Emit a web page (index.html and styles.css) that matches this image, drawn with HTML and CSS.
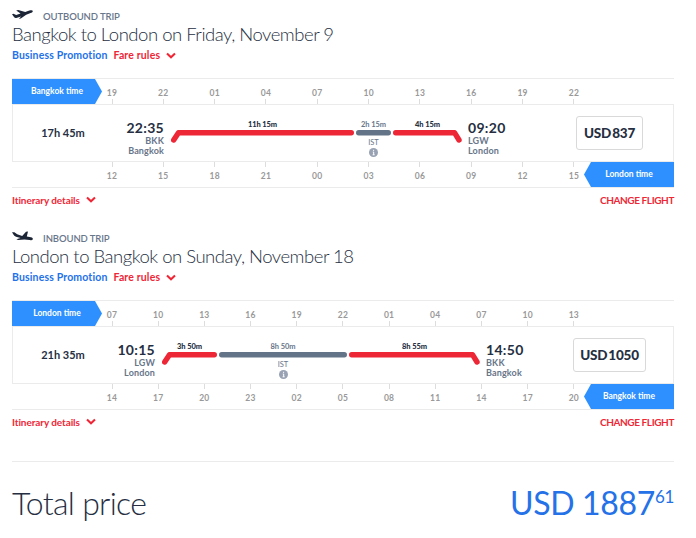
FILE: index.html
```html
<!DOCTYPE html>
<html lang="en">
<head>
    <meta charset="utf-8" />
    <title>Your flights</title>
    <link rel="stylesheet" href="styles.css">
</head>
<body>

    <!-- Outbound -->
    <section class="trip">
        <div class="trip-label">
            <svg class="plane" viewBox="0 0 21 11"><path d="M0 5.2 L1.4 4.7 L4.2 6 L8.6 4.6 L4.2 1.6 L6.2 0.9 L13.2 3 L17.4 1.6 C19.2 1.1 20.6 1.2 20.8 1.9 C21 2.7 19.9 3.6 18.6 4.1 L14.2 5.8 L8.8 9.5 L6.8 9.8 L9.2 7.5 L4.2 9 Q2.8 9.2 2 8 Z"/></svg>
            <span>OUTBOUND TRIP</span>
        </div>
        <h2 class="title">Bangkok to London on Friday, November 9</h2>
        <div class="fare">
            <a class="promo">Business Promotion</a>
            <a class="rules">Fare rules</a>
            <svg class="chevron" viewBox="0 0 10 7"><path d="M1 1.5 L5 5.2 L9 1.5"/></svg>
        </div>

        <div class="timeline">
            <div class="scale scale-top">
                <div class="zone zone-left">Bangkok time</div>
                <div class="hours"><span>19</span><span>22</span><span>01</span><span>04</span><span>07</span><span>10</span><span>13</span><span>16</span><span>19</span><span>22</span></div>
            </div>
            <div class="flight">
                <div class="duration">17h 45m</div>
                <div class="departure" style="width: 51px">
                    <div class="time">22:35</div>
                    <div>BKK</div>
                    <div>Bangkok</div>
                </div>
                <div class="route">
                    <div class="leg" style="width: 183px">
                        <span>11h 15m</span>
                        <svg class="line" width="183" height="14"><path d="M2.7 10 L7.5 2.7 H180.3"/></svg>
                    </div>
                    <div class="leg stop" style="width: 35px">
                        <span>2h 15m</span>
                        <svg class="line" width="35" height="14"><path d="M2.7 2.7 H32.3"/></svg>
                        <div class="airport">IST</div>
                        <svg class="info" viewBox="0 0 9 9"><circle cx="4.5" cy="4.5" r="4.5"/><path d="M4.6 1.8 V2.9 M3.8 4 H4.7 V6.8 M3.6 6.8 H5.6"/></svg>
                    </div>
                    <div class="leg" style="width: 69px">
                        <span>4h 15m</span>
                        <svg class="line" width="69" height="14"><path d="M2.7 2.7 H61.5 L66 10"/></svg>
                    </div>
                </div>
                <div class="arrival">
                    <div class="time">09:20</div>
                    <div>LGW</div>
                    <div>London</div>
                </div>
                <div class="price-cell">
                    <div class="price">USD<b>837</b></div>
                </div>
            </div>
            <div class="scale scale-bottom">
                <div class="hours"><span>12</span><span>15</span><span>18</span><span>21</span><span>00</span><span>03</span><span>06</span><span>09</span><span>12</span><span>15</span></div>
                <div class="zone zone-right">London time</div>
            </div>
        </div>

        <div class="links">
            <a class="details">Itinerary details</a>
            <svg class="chevron" viewBox="0 0 10 7"><path d="M1 1.5 L5 5.2 L9 1.5"/></svg>
            <a class="change">CHANGE FLIGHT</a>
        </div>
    </section>

    <!-- Inbound -->
    <section class="trip">
        <div class="trip-label">
            <svg class="plane" viewBox="0 0 21 11"><path d="M0 1.2 L2.4 1.3 L5.2 3.3 L10.2 4.9 L14 0.8 L16 0.5 L14.8 5.6 L18.9 6.3 C20.4 6.7 21 7.5 20.8 8.2 C20.5 9.1 19.2 9.2 17.6 9.1 L12.4 8.6 L6.2 9 L4.4 8.2 L8.6 7 L4 5.7 Q2 5 1.4 3.6 Z"/></svg>
            <span>INBOUND TRIP</span>
        </div>
        <h2 class="title">London to Bangkok on Sunday, November 18</h2>
        <div class="fare">
            <a class="promo">Business Promotion</a>
            <a class="rules">Fare rules</a>
            <svg class="chevron" viewBox="0 0 10 7"><path d="M1 1.5 L5 5.2 L9 1.5"/></svg>
        </div>

        <div class="timeline">
            <div class="scale scale-top">
                <div class="zone zone-left">London time</div>
                <div class="hours"><span>07</span><span>10</span><span>13</span><span>16</span><span>19</span><span>22</span><span>01</span><span>04</span><span>07</span><span>10</span><span>13</span></div>
            </div>
            <div class="flight">
                <div class="duration">21h 35m</div>
                <div class="departure" style="width: 42px">
                    <div class="time">10:15</div>
                    <div>LGW</div>
                    <div>London</div>
                </div>
                <div class="route">
                    <div class="leg" style="width: 55px">
                        <span>3h 50m</span>
                        <svg class="line" width="55" height="14"><path d="M2.7 10 L7.5 2.7 H52.3"/></svg>
                    </div>
                    <div class="leg stop" style="width: 128px">
                        <span>8h 50m</span>
                        <svg class="line" width="128" height="14"><path d="M2.7 2.7 H125.3"/></svg>
                        <div class="airport">IST</div>
                        <svg class="info" viewBox="0 0 9 9"><circle cx="4.5" cy="4.5" r="4.5"/><path d="M4.6 1.8 V2.9 M3.8 4 H4.7 V6.8 M3.6 6.8 H5.6"/></svg>
                    </div>
                    <div class="leg" style="width: 131px">
                        <span>8h 55m</span>
                        <svg class="line" width="131" height="14"><path d="M2.7 2.7 H123.5 L128 10"/></svg>
                    </div>
                </div>
                <div class="arrival">
                    <div class="time">14:50</div>
                    <div>BKK</div>
                    <div>Bangkok</div>
                </div>
                <div class="price-cell">
                    <div class="price">USD<b>1050</b></div>
                </div>
            </div>
            <div class="scale scale-bottom">
                <div class="hours"><span>14</span><span>17</span><span>20</span><span>23</span><span>02</span><span>05</span><span>08</span><span>11</span><span>14</span><span>17</span><span>20</span></div>
                <div class="zone zone-right">Bangkok time</div>
            </div>
        </div>

        <div class="links">
            <a class="details">Itinerary details</a>
            <svg class="chevron" viewBox="0 0 10 7"><path d="M1 1.5 L5 5.2 L9 1.5"/></svg>
            <a class="change">CHANGE FLIGHT</a>
        </div>
    </section>

    <div class="total">
        <span class="total-label">Total price</span>
        <span class="total-price">USD 1887<sup>61</sup></span>
    </div>

</body>
</html>
```

FILE: styles.css
```css
:root {
    --red: #ee2737;
    --blue: #2e90ff;
    --link: #2471e8;
    --dark: #262f42;
    --grey: #68768a;
    --rule: #ebebeb;
}

* {
    box-sizing: border-box;
}

body {
    margin: 0;
    padding: 0 22px 0 12px;
    background: #fff;
    color: var(--dark);
    font-family: Lato, sans-serif;
    font-size: 9px;
}

svg {
    display: block;
    flex: none;
}

.trip {
    height: 222px;
    padding-top: 9px;
}

/* Heading */
.trip-label {
    display: flex;
    height: 14px;
    gap: 10px;
    color: var(--grey);
    font-size: 9.5px;
    font-weight: 600;
    line-height: 15px;
    letter-spacing: -0.1px;
}

.plane {
    width: 21px;
    height: 11px;
    fill: #1c2536;
}

.title {
    margin: 0;
    font-size: 18.5px;
    font-weight: 300;
    line-height: 23px;
    letter-spacing: -0.48px;
    white-space: nowrap;
}

.fare,
.links {
    display: flex;
    align-items: center;
    height: 18px;
    font-size: 10.5px;
    font-weight: 700;
    color: var(--red);
}

.fare {
    letter-spacing: 0.15px;
}

.promo {
    width: 101.5px;
    color: var(--link);
}

.chevron {
    width: 10px;
    height: 7px;
    margin-left: 6px;
    fill: none;
    stroke: var(--red);
    stroke-width: 2.1;
}

/* Timeline */
.timeline {
    height: 110px;
    margin-top: 14px;
    border-top: 1px solid var(--rule);
    border-bottom: 1px solid var(--rule);
}

.scale {
    display: flex;
    height: 25px;
}

.zone {
    width: 90px;
    color: #fff;
    font-size: 8.5px;
    font-weight: 700;
    line-height: 25px;
    text-align: center;
    background: var(--blue);
}

.zone-left {
    clip-path: polygon(0 0, 83px 0, 100% 50%, 83px 100%, 0 100%);
}

.zone-right {
    margin-left: 10px;
    clip-path: polygon(7px 0, 100% 0, 100% 100%, 7px 100%, 0 50%);
}

.hours {
    display: flex;
    justify-content: space-between;
    width: 462px;
    color: #999;
    font-size: 8.5px;
    font-weight: 700;
    letter-spacing: 0.3px;
}

.scale-top .hours {
    margin-left: 10px;
}

.scale-bottom .hours {
    margin-left: 100px;
}

/* zero-width cells keep the labels centred on their ticks */
.hours span {
    display: flex;
    flex-direction: column;
    align-items: center;
    width: 0;
    line-height: 10px;
}

.scale-top span {
    justify-content: flex-end;
}

.hours span::before,
.hours span::after {
    width: 1px;
    height: 5px;
    background: #ddd;
}

.scale-top span::after {
    content: "";
    margin-top: 1px;
}

.scale-bottom span::before {
    content: "";
    margin-bottom: 4px;
}

.flight {
    display: flex;
    height: 58px;
    border: 1px solid var(--rule);
}

.duration {
    width: 100px;
    font-size: 11px;
    font-weight: 700;
    line-height: 56px;
    text-align: center;
}

.departure,
.arrival {
    padding-top: 15px;
    color: var(--grey);
    font-size: 9px;
    font-weight: 700;
    line-height: 9.5px;
    letter-spacing: 0.15px;
    white-space: nowrap;
}

.departure {
    display: flex;
    flex-direction: column;
    align-items: flex-end;
}

.time {
    margin-bottom: 1px;
    color: var(--dark);
    font-size: 14px;
    font-weight: 700;
    line-height: 15px;
    letter-spacing: 0.3px;
}

.route {
    display: flex;
    gap: 2px;
    padding: 15px 6px 0 7px;
}

.leg {
    display: flex;
    flex-direction: column;
    align-items: center;
    font-size: 7.5px;
    font-weight: 900;
    line-height: 10px;
    letter-spacing: -0.1px;
    white-space: nowrap;
}

.line {
    fill: none;
    stroke: var(--red);
    stroke-width: 5.4;
    stroke-linecap: round;
    stroke-linejoin: round;
}

.stop {
    color: var(--grey);
    font-weight: 700;
}

.stop .line {
    height: 8px;
    stroke: #647488;
}

.airport {
    font-size: 7.5px;
    font-weight: 400;
    line-height: 10px;
}

.info {
    width: 9px;
    height: 9px;
    fill: #98a2b3;
}

.info path {
    fill: none;
    stroke: #fff;
    stroke-width: 1;
}

.price-cell {
    display: flex;
    align-items: center;
    justify-content: center;
    width: 127px;
    margin-left: auto;
}

.price {
    display: flex;
    gap: 1px;
    padding: 0 6.5px;
    border: 1px solid #d9d9d9;
    border-radius: 3px;
    font-size: 13.5px;
    font-weight: 900;
    line-height: 32px;
    letter-spacing: -0.2px;
}

.price b {
    font-weight: 900;
}

.links {
    height: 23px;
    font-size: 10px;
}

.details {
    letter-spacing: -0.08px;
}

.change {
    margin-left: auto;
    letter-spacing: -0.4px;
}

/* Total */
.total {
    display: flex;
    justify-content: space-between;
    margin-top: 17px;
    padding-top: 21px;
    border-top: 1px solid var(--rule);
    font-size: 32px;
    line-height: 40px;
}

.total-label {
    font-weight: 300;
    letter-spacing: -0.7px;
}

.total-price {
    display: flex;
    color: var(--link);
    letter-spacing: -0.35px;
}

.total-price sup {
    font-size: 17px;
    line-height: 28px;
}
```
